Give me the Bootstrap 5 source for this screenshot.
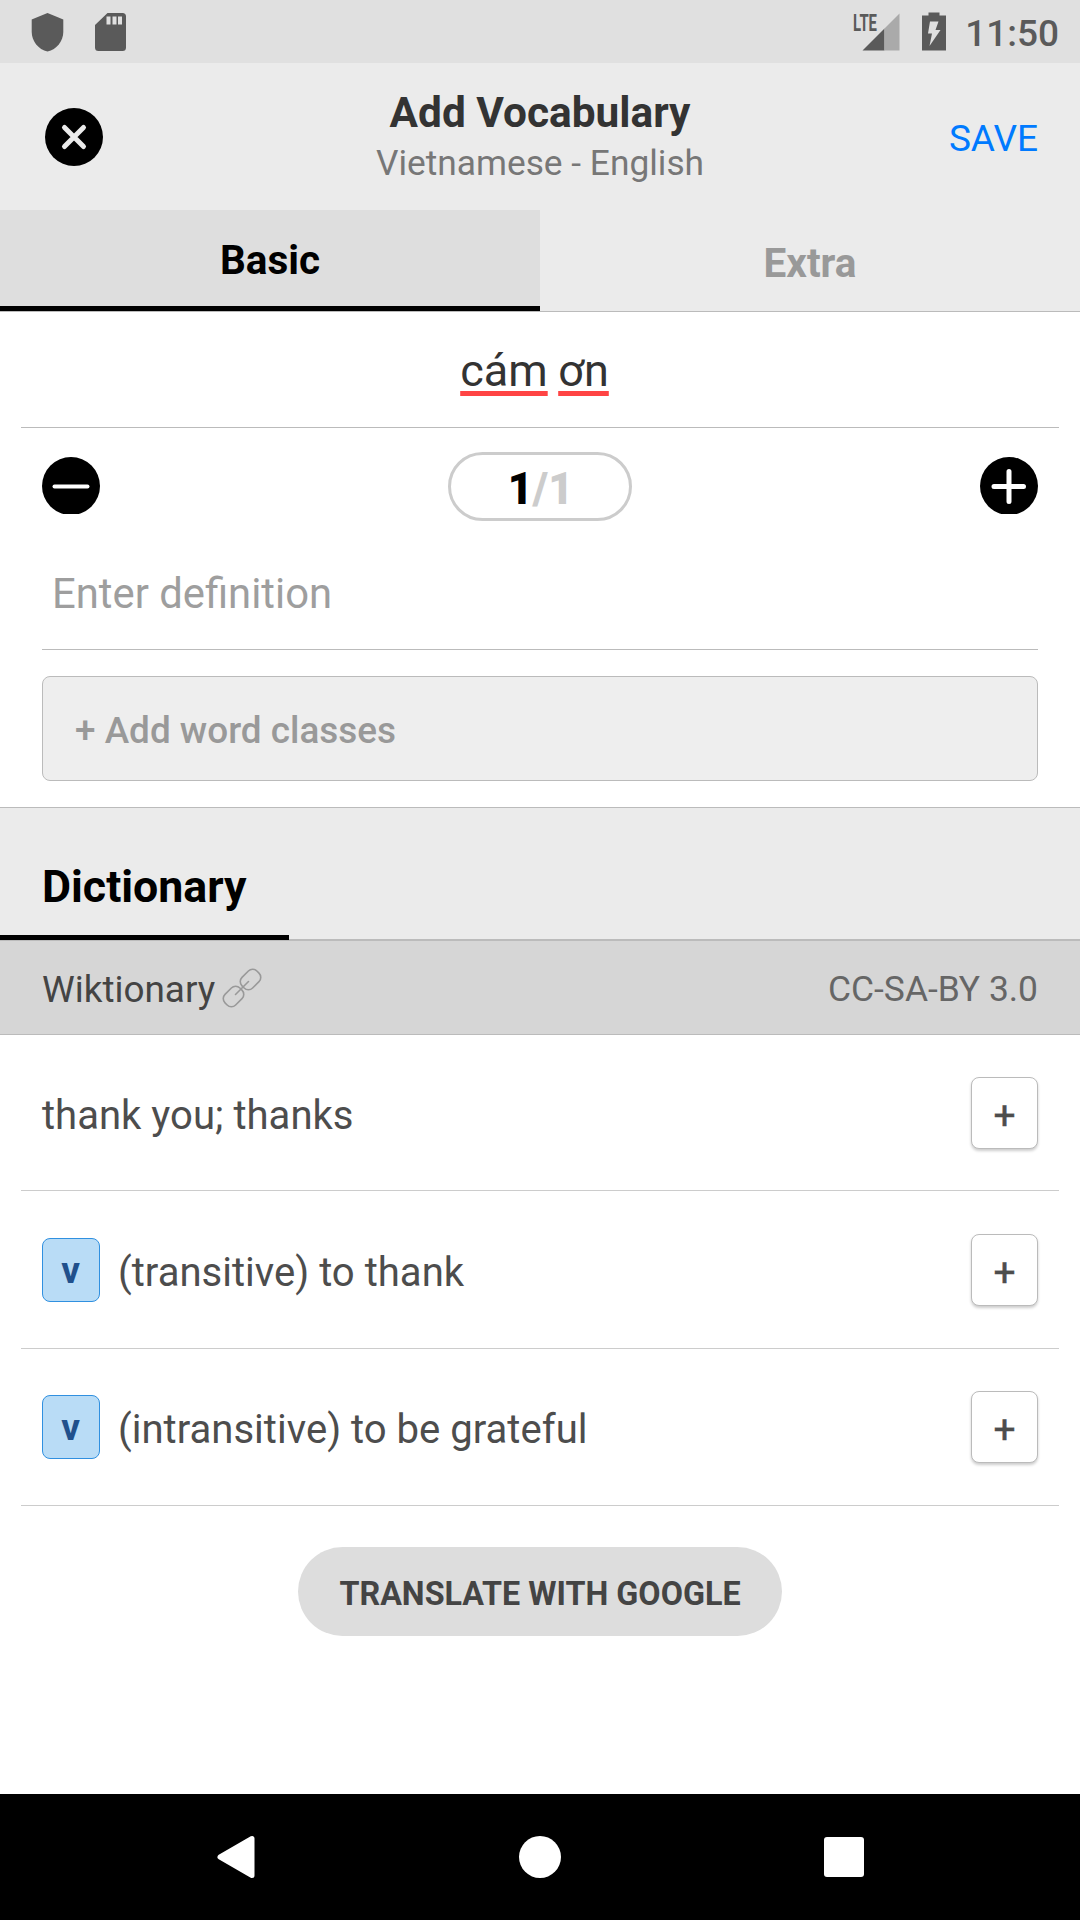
<!DOCTYPE html>
<html lang="en">
<head>
<meta charset="utf-8">
<meta name="viewport" content="width=device-width, initial-scale=1">
<title>Add Vocabulary</title>
<link rel="stylesheet" href="https://cdn.jsdelivr.net/npm/bootstrap@5.3.0/dist/css/bootstrap.min.css">
<style>
  body { font-family: Roboto, "Noto Sans", sans-serif; background: #fff; color: #4d4d4d; }
  .screen { width: 1080px; height: 1920px; overflow: hidden; }
  svg { display: block; flex: none; }
  .status-bar { height: 63px; background: #e0e0e0; color: #5a5a5a; padding: 0 21px 0 31px; }
  .sd-icon { margin-left: 31px; }
  .battery { margin-left: 22px; }
  .clock { font-size: 37px; font-weight: 500; line-height: 43px; padding-top: 3px; margin-left: 19px; }
  .app-header { height: 147px; background: #ebebeb; padding: 25px 42px 0 42px; display: grid; grid-template-columns: 1fr auto 1fr; line-height: 50px; }
  .app-title { font-size: 42.4px; font-weight: 700; color: #333; }
  .app-sub { font-size: 35.3px; color: #777; }
  .close-btn { margin: 20px 0 0 3px; }
  .save-btn { font-size: 37px; color: #007aff; text-decoration: none; padding-top: 26px; }
  .tabs { height: 102px; background: #ebebeb; border-bottom: 1px solid #bbb; }
  .tab-item { font-size: 40.5px; font-weight: 700; color: #999; padding-top: 5px; }
  .tab-item.current { color: #000; background: #dedede; border-bottom: 5px solid #000; padding-top: 4px; }
  .word { height: 116px; margin: 0 21px; border-bottom: 1px solid #bbb; font-size: 45px; color: #333; padding: 3px 11px 0 0; gap: 10.5px; }
  .word span { text-decoration: underline #f44 5px; text-underline-offset: 5px; text-decoration-skip-ink: none; }
  .editor { padding: 24px 42px 26px; border-bottom: 1px solid #bbb; height: 380px; }
  .round-btn { margin-bottom: 2px; }
  .counter { width: 184px; height: 69px; border: 3px solid #ccc; border-radius: 35px; font-size: 43.5px; font-weight: 900; color: #ccc; padding: 7px 0 0 1px; }
  .counter span { color: #000; }
  .def-input { margin-top: 32px; height: 97px; padding: 1px 0 0 10px; border-bottom: 1px solid #bbb; font-size: 41.8px; line-height: 80px; color: #9e9e9e; }
  .add-class { margin-top: 26px; height: 105px; border: 1px solid #bbb; border-radius: 8px; background: #eee; font-size: 36.9px; font-weight: 500; color: #999; padding: 5px 0 0 32px; }
  .dict-head { height: 132px; background: #ebebeb; border-bottom: 1px solid #bbb; }
  .dict-tab { width: 289px; height: 132px; border-bottom: 5px solid #000; font-size: 44.7px; font-weight: 700; color: #000; padding: 32px 0 0 42px; }
  .source { height: 95px; background: #d6d6d6; border: solid #bbb; border-width: 1px 0; padding: 4px 42px 0 42px; font-size: 36.9px; color: #444; }
  .chain { margin: -4px 0 0 7px; }
  .license { font-size: 35.4px; color: #666; }
  .entry { height: 157px; margin: 0 21px; padding: 0 21px; border-bottom: 1px solid #ccc; font-size: 40.1px; }
  .entry.first { height: 156px; }
  .entry.second { height: 158px; }
  .entry p { margin: 0; padding-top: 7px; }
  .wclass { width: 58px; height: 64px; border: 1px solid #3090e0; border-radius: 8px; background: #b9dcf6; color: #20508c; font-size: 37px; font-weight: 700; padding: 2px 1px 0 0; margin-right: 18px; }
  .plus-btn { width: 67px; height: 72px; border: 1px solid #bbb; border-radius: 8px; background: #fff; box-shadow: 0 2px 3px rgba(0,0,0,.2); font-size: 39px; color: #4d4d4d; -webkit-text-stroke: .4px #4d4d4d; padding: 7px 0 0; line-height: 1.2; }
  .google-btn { width: 484px; height: 89px; margin-top: 41px; background: #ddd; border-radius: 45px; font-size: 32.3px; font-weight: 700; color: #444; padding-top: 5px; }
  .nav-keys { height: 126px; background: #000; padding: 0 216px; }
</style>
</head>
<body>
<main class="screen d-flex flex-column">
  <div class="status-bar d-flex align-items-center">
    <svg width="33" height="40" viewBox="0 0 33 40"><path fill="#5a5a5a" d="M16.5 1 32.3 7.5V20c0 9-6.6 17.6-15.8 19.5C7.3 37.6.7 29 .7 20V7.5z"/></svg>
    <svg class="sd-icon" width="32" height="40" viewBox="0 0 32 40"><path fill="#5a5a5a" fill-rule="evenodd" d="M12.5 1H27.5q3.5 0 3.5 3.5V35.5q0 3.5-3.5 3.5H3.5Q0 39 0 35.5V13zM11.5 4.5v8h4v-8zm6 0v8h4v-8zm5.500 0v8h4v-8z"/></svg>
    <div class="ms-auto d-flex align-items-center">
      <svg width="50" height="52" viewBox="0 -6 50 52"><text x="3" y="18.5" font-family="Roboto" font-size="23" font-weight="700" fill="#5a5a5a" textLength="24" lengthAdjust="spacingAndGlyphs">LTE</text><path fill="#5a5a5a" d="M12.5 38.5 34.5 16.5v22z"/><path fill="#aaa" d="M34.5 16.5 49.5 1.5v37H34.5z"/></svg>
      <svg class="battery" width="24" height="40" viewBox="0 0 24 40"><path fill="#5a5a5a" d="M6.500 .5h11v3H24v35H0V3.5h6.500z"/><path fill="#e0e0e0" d="M8 9.5h8.500L13.5 18h5L7.5 34 10 21.5H6z"/></svg>
      <div class="clock">11:50</div>
    </div>
  </div>

  <header class="app-header">
    <svg class="close-btn" width="58" height="58" viewBox="0 0 58 58"><circle cx="29" cy="29" r="29"/><path d="M19.5 19.5 38.5 38.5M38.5 19.5 19.5 38.5" stroke="#ebebeb" stroke-width="5" stroke-linecap="round"/></svg>
    <div class="text-center">
      <div class="app-title">Add Vocabulary</div>
      <div class="app-sub">Vietnamese - English</div>
    </div>
    <a class="save-btn text-end" href="#">SAVE</a>
  </header>

  <nav class="tabs d-flex">
    <div class="tab-item current w-50 d-flex justify-content-center align-items-center">Basic</div>
    <div class="tab-item w-50 d-flex justify-content-center align-items-center">Extra</div>
  </nav>

  <div class="word d-flex justify-content-center align-items-center"><span>cám</span><span>ơn</span></div>

  <section class="editor">
    <div class="d-flex justify-content-between align-items-center">
      <svg class="round-btn" width="58" height="57" viewBox="0 0 58 57"><circle cx="29" cy="29" r="29"/><path d="M12.5 29.5H45.5" stroke="#fff" stroke-width="4" stroke-linecap="round"/></svg>
      <div class="counter d-flex justify-content-center align-items-center"><span>1</span>/1</div>
      <svg class="round-btn" width="58" height="57" viewBox="0 0 58 57"><circle cx="29" cy="29" r="29"/><path d="M14 29.5H43.5M29 14.5V44.5" stroke="#fff" stroke-width="5" stroke-linecap="round"/></svg>
    </div>
    <div class="def-input">Enter definition</div>
    <div class="add-class d-flex align-items-center">+ Add word classes</div>
  </section>

  <div class="dict-head"><div class="dict-tab d-flex align-items-center">Dictionary</div></div>
  <div class="source d-flex align-items-center">
    <span>Wiktionary</span>
    <svg class="chain" width="40" height="40" viewBox="0 0 40 40" fill="none" stroke="#999" stroke-width="1.6" stroke-linecap="round"><rect x="-7.5" y="-10.5" width="15" height="21" rx="6" transform="translate(28.5 11.5) rotate(45)"/><rect x="-7.5" y="-10.5" width="15" height="21" rx="6" transform="translate(11.5 28.5) rotate(45)"/><path d="M13.5 26.5 26.5 13.5"/></svg>
    <span class="license ms-auto">CC-SA-BY 3.0</span>
  </div>

  <div class="entry first d-flex align-items-center">
    <p>thank you; thanks</p><button class="plus-btn ms-auto">+</button>
  </div>
  <div class="entry second d-flex align-items-center">
    <span class="wclass d-flex justify-content-center align-items-center">v</span><p>(transitive) to thank</p><button class="plus-btn ms-auto">+</button>
  </div>
  <div class="entry d-flex align-items-center">
    <span class="wclass d-flex justify-content-center align-items-center">v</span><p>(intransitive) to be grateful</p><button class="plus-btn ms-auto">+</button>
  </div>
  <div class="google-btn align-self-center d-flex justify-content-center align-items-center">TRANSLATE WITH GOOGLE</div>

  <footer class="nav-keys mt-auto d-flex justify-content-between align-items-center">
    <svg width="40" height="44" viewBox="0 0 40 44"><path d="M36 3.5v37L4 22z" fill="#fff" stroke="#fff" stroke-width="5" stroke-linejoin="round"/></svg>
    <svg width="44" height="44" viewBox="0 0 44 44"><circle cx="22" cy="22" r="21" fill="#fff"/></svg>
    <svg width="40" height="40" viewBox="0 0 40 40"><rect width="40" height="40" rx="3" fill="#fff"/></svg>
  </footer>
</main>
<script src="https://cdn.jsdelivr.net/npm/bootstrap@5.3.0/dist/js/bootstrap.bundle.min.js"></script>
</body>
</html>
